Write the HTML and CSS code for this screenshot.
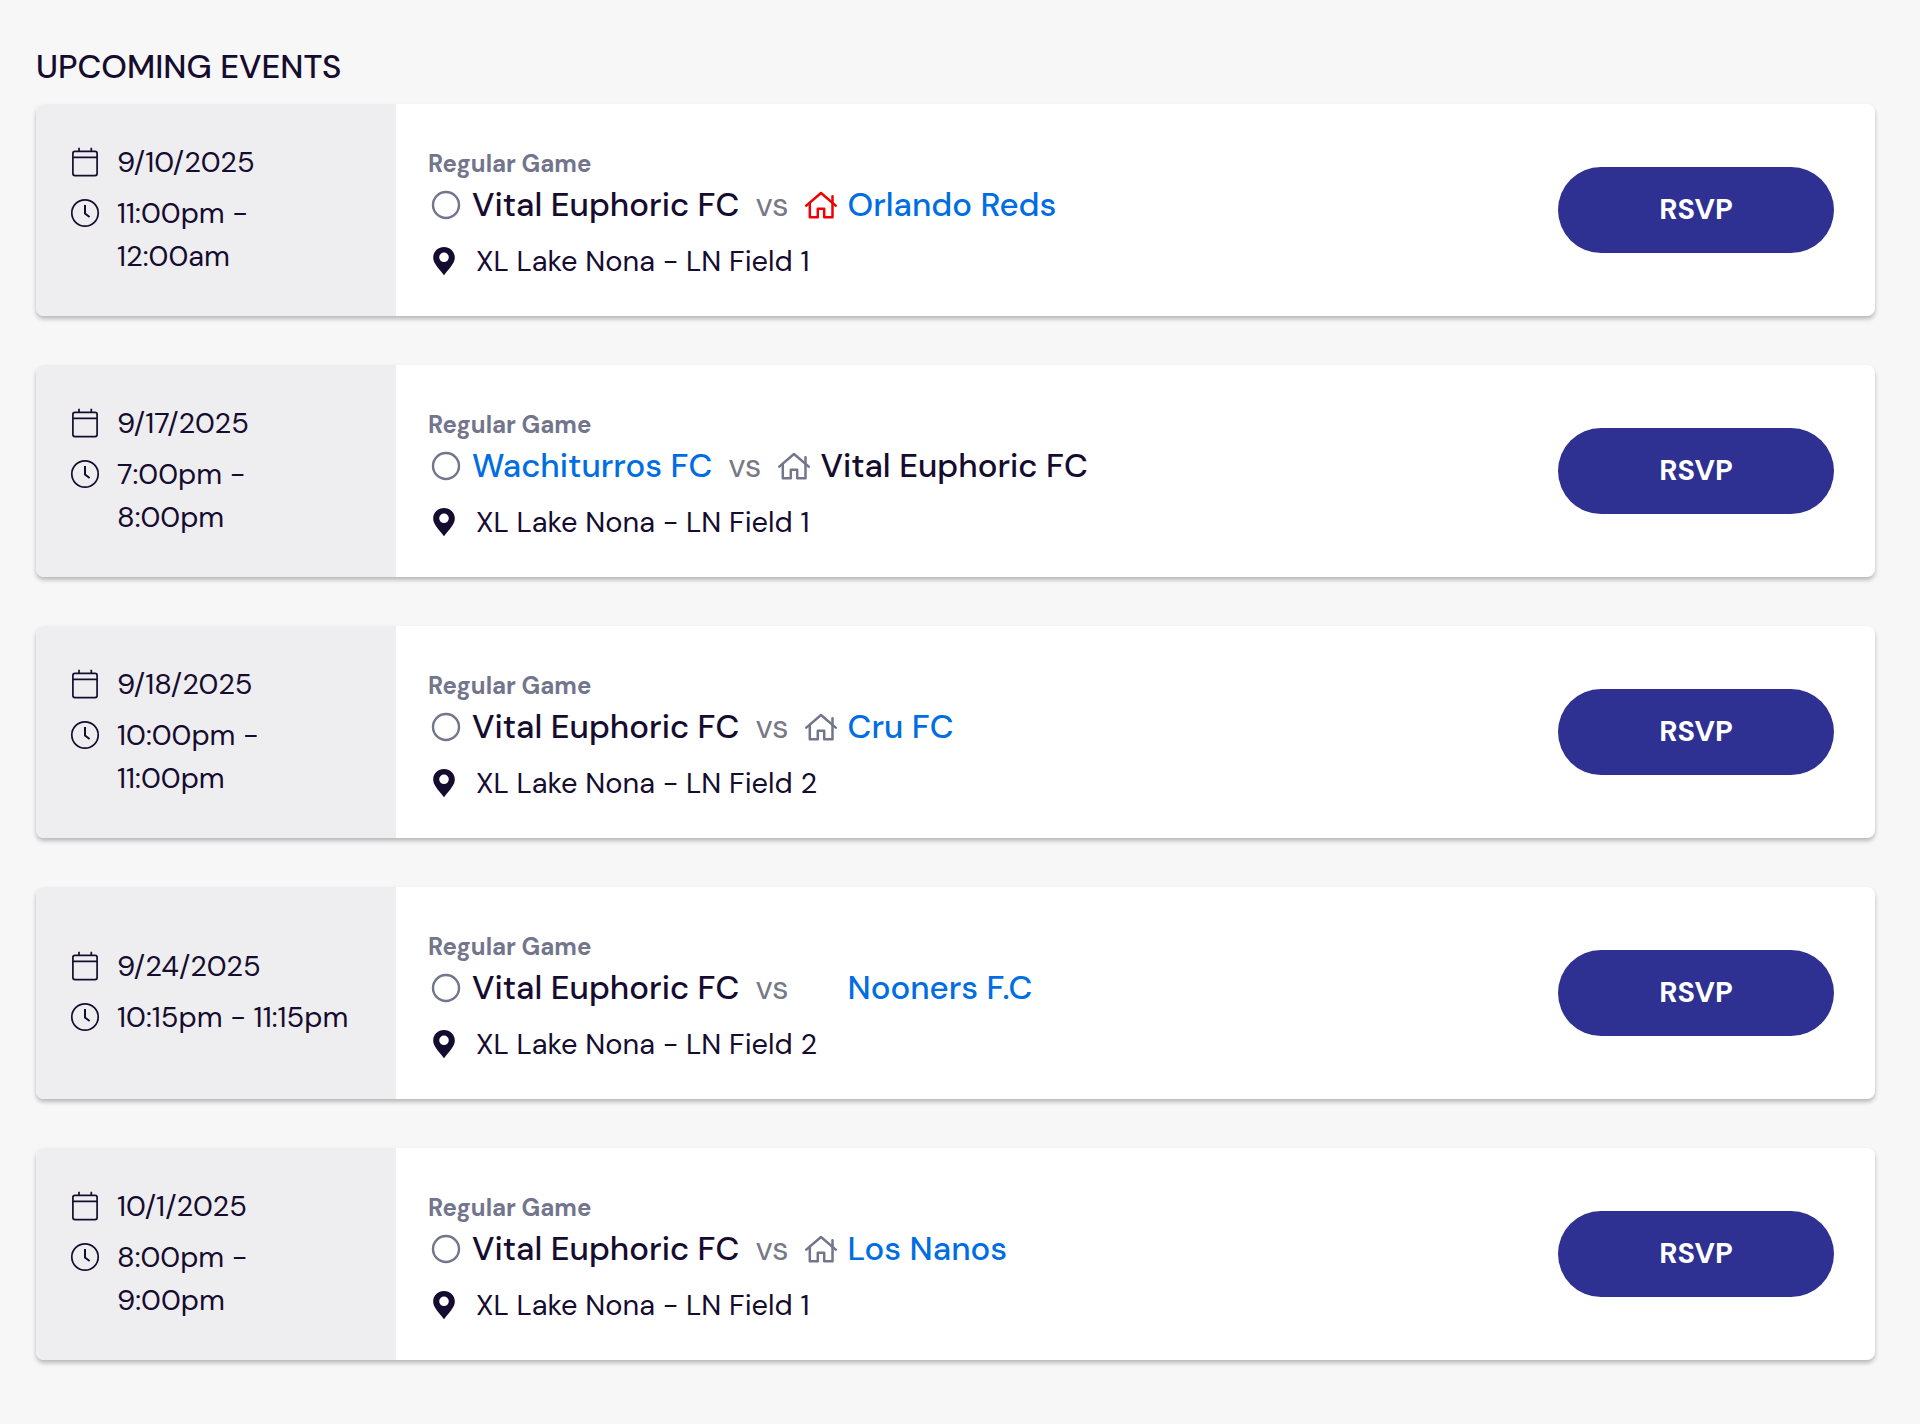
FILE: index.html
```
<!DOCTYPE html>
<html lang="en">
<head>
<meta charset="utf-8">
<meta name="viewport" content="width=device-width, initial-scale=1">
<title>Upcoming Events</title>
<link rel="stylesheet" href="styles.css">
</head>
<body>
<svg class="sprite" aria-hidden="true">
  <symbol id="calendar" viewBox="0 0 30 30"><g fill="none" stroke="currentColor" stroke-width="1.7"><rect x="2.9" y="4.4" width="24.2" height="24.2" rx="2"/><path d="M3 10.3h24M9 .7v3.7M21.3 .7v3.7"/></g></symbol>
  <symbol id="clock" viewBox="0 0 30 30"><g fill="none" stroke="currentColor"><circle cx="15" cy="15" r="13.2" stroke-width="1.7"/><path d="M15 7v8.500l4.600 3.500" stroke-width="2"/></g></symbol>
  <symbol id="jersey" viewBox="0 0 30 30"><circle cx="15" cy="15" r="13" fill="none" stroke="currentColor" stroke-width="2.4"/></symbol>
  <symbol id="pin" viewBox="0 0 30 30"><path fill="currentColor" fill-rule="evenodd" d="M15 1C9 1 4.200 5.600 4.200 11.500 4.200 17 8.500 21 15 29.200 21.500 21 25.800 17 25.800 11.500 25.800 5.600 21 1 15 1ZM15 6.500a4.800 4.800 0 1 0 0 9.600 4.800 4.800 0 0 0 0-9.600Z"/></symbol>
  <symbol id="house" viewBox="0 0 32 28"><g fill="none" stroke="currentColor" stroke-width="2.5" stroke-linecap="round" stroke-linejoin="round"><path d="M1.300 14.600 16 2l14.700 12.600"/><path d="M4.800 12v14.200h8v-8.400h6.400v8.400H27.500V5.200"/></g></symbol>
</svg>
<main class="events">
  <h1 class="events-title">UPCOMING EVENTS</h1>

  <article class="event">
    <div class="when">
      <div class="when-row"><svg class="icon"><use href="#calendar"/></svg><time>9/10/2025</time></div>
      <div class="when-row"><svg class="icon"><use href="#clock"/></svg><span>11:00pm -<br>12:00am</span></div>
    </div>
    <div class="details">
      <div class="kind">Regular Game</div>
      <div class="match"><svg class="jersey"><use href="#jersey"/></svg><span>Vital Euphoric FC</span><span class="vs">vs</span><svg class="house house-red"><use href="#house"/></svg><a href="#">Orlando Reds</a></div>
      <div class="place"><svg class="pin"><use href="#pin"/></svg><span>XL Lake Nona - LN Field 1</span></div>
    </div>
    <button class="rsvp" type="button">RSVP</button>
  </article>

  <article class="event">
    <div class="when">
      <div class="when-row"><svg class="icon"><use href="#calendar"/></svg><time>9/17/2025</time></div>
      <div class="when-row"><svg class="icon"><use href="#clock"/></svg><span>7:00pm -<br>8:00pm</span></div>
    </div>
    <div class="details">
      <div class="kind">Regular Game</div>
      <div class="match"><svg class="jersey"><use href="#jersey"/></svg><a href="#">Wachiturros FC</a><span class="vs">vs</span><svg class="house"><use href="#house"/></svg><span>Vital Euphoric FC</span></div>
      <div class="place"><svg class="pin"><use href="#pin"/></svg><span>XL Lake Nona - LN Field 1</span></div>
    </div>
    <button class="rsvp" type="button">RSVP</button>
  </article>

  <article class="event">
    <div class="when">
      <div class="when-row"><svg class="icon"><use href="#calendar"/></svg><time>9/18/2025</time></div>
      <div class="when-row"><svg class="icon"><use href="#clock"/></svg><span>10:00pm -<br>11:00pm</span></div>
    </div>
    <div class="details">
      <div class="kind">Regular Game</div>
      <div class="match"><svg class="jersey"><use href="#jersey"/></svg><span>Vital Euphoric FC</span><span class="vs">vs</span><svg class="house"><use href="#house"/></svg><a href="#">Cru FC</a></div>
      <div class="place"><svg class="pin"><use href="#pin"/></svg><span>XL Lake Nona - LN Field 2</span></div>
    </div>
    <button class="rsvp" type="button">RSVP</button>
  </article>

  <article class="event">
    <div class="when">
      <div class="when-row"><svg class="icon"><use href="#calendar"/></svg><time>9/24/2025</time></div>
      <div class="when-row"><svg class="icon"><use href="#clock"/></svg><span>10:15pm - 11:15pm</span></div>
    </div>
    <div class="details">
      <div class="kind">Regular Game</div>
      <div class="match"><svg class="jersey"><use href="#jersey"/></svg><span>Vital Euphoric FC</span><span class="vs">vs</span><span class="house"></span><a href="#">Nooners F.C</a></div>
      <div class="place"><svg class="pin"><use href="#pin"/></svg><span>XL Lake Nona - LN Field 2</span></div>
    </div>
    <button class="rsvp" type="button">RSVP</button>
  </article>

  <article class="event">
    <div class="when">
      <div class="when-row"><svg class="icon"><use href="#calendar"/></svg><time>10/1/2025</time></div>
      <div class="when-row"><svg class="icon"><use href="#clock"/></svg><span>8:00pm -<br>9:00pm</span></div>
    </div>
    <div class="details">
      <div class="kind">Regular Game</div>
      <div class="match"><svg class="jersey"><use href="#jersey"/></svg><span>Vital Euphoric FC</span><span class="vs">vs</span><svg class="house"><use href="#house"/></svg><a href="#">Los Nanos</a></div>
      <div class="place"><svg class="pin"><use href="#pin"/></svg><span>XL Lake Nona - LN Field 1</span></div>
    </div>
    <button class="rsvp" type="button">RSVP</button>
  </article>
</main>
</body>
</html>
```
FILE: styles.css
```
* { box-sizing: border-box; }

body {
  margin: 0;
  background: #f7f7f7;
  color: #160c2f;
  font-family: "DM Sans", Inter, "Liberation Sans", sans-serif;
  font-size: 29px;
}

svg { display: block; flex: none; }
.sprite { display: none; }

.events { padding: 45px 45px 62px 36px; }

.events-title {
  margin: 0 0 15px;
  font-size: 33px;
  line-height: 44px;
  font-weight: 500;
}

.event {
  display: flex;
  align-items: center;
  min-height: 212px;
  margin-bottom: 49px;
  padding-right: 41px;
  border-radius: 8px;
  background: #fff;
  box-shadow: 0 3px 4px rgba(0, 0, 0, 0.25);
}

.when {
  display: flex;
  flex-direction: column;
  justify-content: center;
  align-self: stretch;
  flex: none;
  gap: 8px;
  width: 360px;
  padding: 0 0 2px 34px;
  border-radius: 8px 0 0 8px;
  background: #eeeef0;
  line-height: 43px;
}

.when-row { display: flex; gap: 17px; white-space: nowrap; }
.icon { width: 30px; height: 30px; margin-top: 6px; }

.details { flex: 1; padding: 10px 0 0 32px; }

.kind {
  color: #73758c;
  font-size: 24px;
  line-height: 32px;
  font-weight: 700;
}

.match {
  display: flex;
  align-items: center;
  padding-left: 3px;
  font-size: 33px;
  line-height: 50px;
  font-weight: 500;
}

.match a { color: #006ee2; text-decoration: none; }
.jersey { width: 30px; height: 30px; margin-right: 11px; color: #73758c; }
.vs { margin: 0 17px 0 16px; color: #777986; font-weight: 400; }
.house { width: 32px; height: 28px; margin-right: 10px; color: #73758c; }
.house-red { color: #f00000; }

.place {
  display: flex;
  align-items: center;
  gap: 17px;
  padding: 10px 0 0 1px;
  line-height: 43px;
}

.pin { width: 30px; height: 30px; }

.rsvp {
  flex: none;
  width: 276px;
  height: 86px;
  padding: 0 0 2px;
  border: 0;
  border-radius: 43px;
  background: #2e3192;
  color: #fff;
  font: inherit;
  font-weight: 700;
}
```
